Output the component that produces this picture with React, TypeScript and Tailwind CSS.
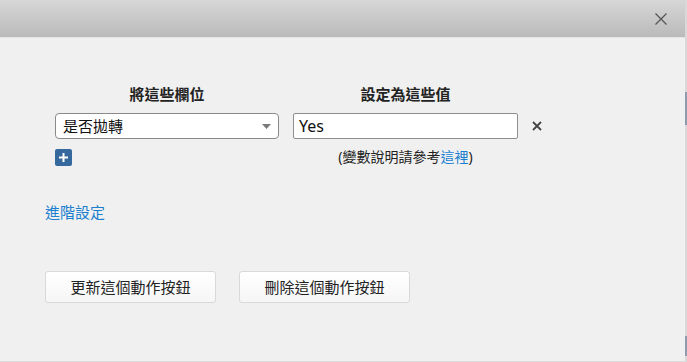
const font = { fontFamily: '"Noto Sans", "Noto Sans CJK TC", sans-serif' };

export default function App() {
  return (
    <div className="flex h-[362px] w-[687px] overflow-hidden bg-[#f0f0f0]" style={font}>
      <div className="flex w-[685px] flex-col border-b border-[#dcdcdc]">
        <div className="flex h-[38px] shrink-0 items-center justify-end border-b border-[#e4e4e4] bg-gradient-to-b from-[#d7d7d7] to-[#bababa] pr-[18px]">
          <svg width="12" height="12" viewBox="0 0 12 12" className="text-[#555]">
            <path d="M0.5 0.5 L11.5 11.5 M11.5 0.5 L0.5 11.5" stroke="currentColor" strokeWidth="1.3" fill="none" />
          </svg>
        </div>

        <div className="flex flex-1 flex-col bg-[#f0f0f0] pl-[45px] pt-[46px]">
          <div className="flex pl-[10px]">
            <div className="w-[224px]">
              <div className="h-[21px] text-center text-[15px] font-bold leading-[21px] text-[#222]">將這些欄位</div>
              <div className="mt-[8px] flex h-[26px] items-center justify-between rounded-[4px] border border-[#8a8a8a] bg-white pl-[7px] pr-[7px]">
                <span className="text-[15px] text-[#111]">是否拋轉</span>
                <svg width="9" height="5" viewBox="0 0 9 5">
                  <path d="M0 0 H9 L4.5 5 Z" fill="#7a7a7a" />
                </svg>
              </div>
              <button className="mt-[10px] flex h-[17px] w-[17px] items-center justify-center rounded-[2px] bg-[#35689d]">
                <svg width="9" height="9" viewBox="0 0 9 9">
                  <path d="M4.5 0 V9 M0 4.5 H9" stroke="white" strokeWidth="2" />
                </svg>
              </button>
            </div>

            <div className="ml-[14px] w-[225px]">
              <div className="h-[21px] text-center text-[15px] font-bold leading-[21px] text-[#222]">設定為這些值</div>
              <div className="mt-[8px] flex h-[26px] items-center rounded-[2px] border border-[#8f8f8f] bg-white pl-[5px]">
                <span className="text-[16px] text-[#111]">Yes</span>
              </div>
              <div className="mt-[8px] text-center text-[14px] leading-[20px] text-[#222]">
                (變數說明請參考<a className="text-[#1b7fcf]">這裡</a>)
              </div>
            </div>

            <div className="ml-[14px] mt-[29px] flex h-[26px] items-center">
              <svg width="10" height="10" viewBox="0 0 10 10">
                <path d="M1 1 L9 9 M9 1 L1 9" stroke="#444" strokeWidth="1.8" />
              </svg>
            </div>
          </div>

          <a className="mt-[35px] block h-[20px] text-[15px] leading-[20px] text-[#1b7fcf]">進階設定</a>

          <div className="mt-[49px] flex gap-[23px]">
            <button className="h-[32px] w-[171px] rounded-[3px] border border-[#d9d9d9] bg-gradient-to-b from-white to-[#f6f6f6] text-[15px] text-[#222]">
              更新這個動作按鈕
            </button>
            <button className="h-[32px] w-[171px] rounded-[3px] border border-[#d9d9d9] bg-gradient-to-b from-white to-[#f6f6f6] text-[15px] text-[#222]">
              刪除這個動作按鈕
            </button>
          </div>
        </div>
      </div>

      <div className="flex w-[2px] flex-col bg-[#d9d9d9]">
        <div className="h-[92px]" />
        <div className="h-[33px] bg-[#8d9bb0]" />
        <div className="flex-1" />
        <div className="h-[20px] bg-[#8d9bb0]" />
        <div className="h-[6px]" />
      </div>
    </div>
  );
}
